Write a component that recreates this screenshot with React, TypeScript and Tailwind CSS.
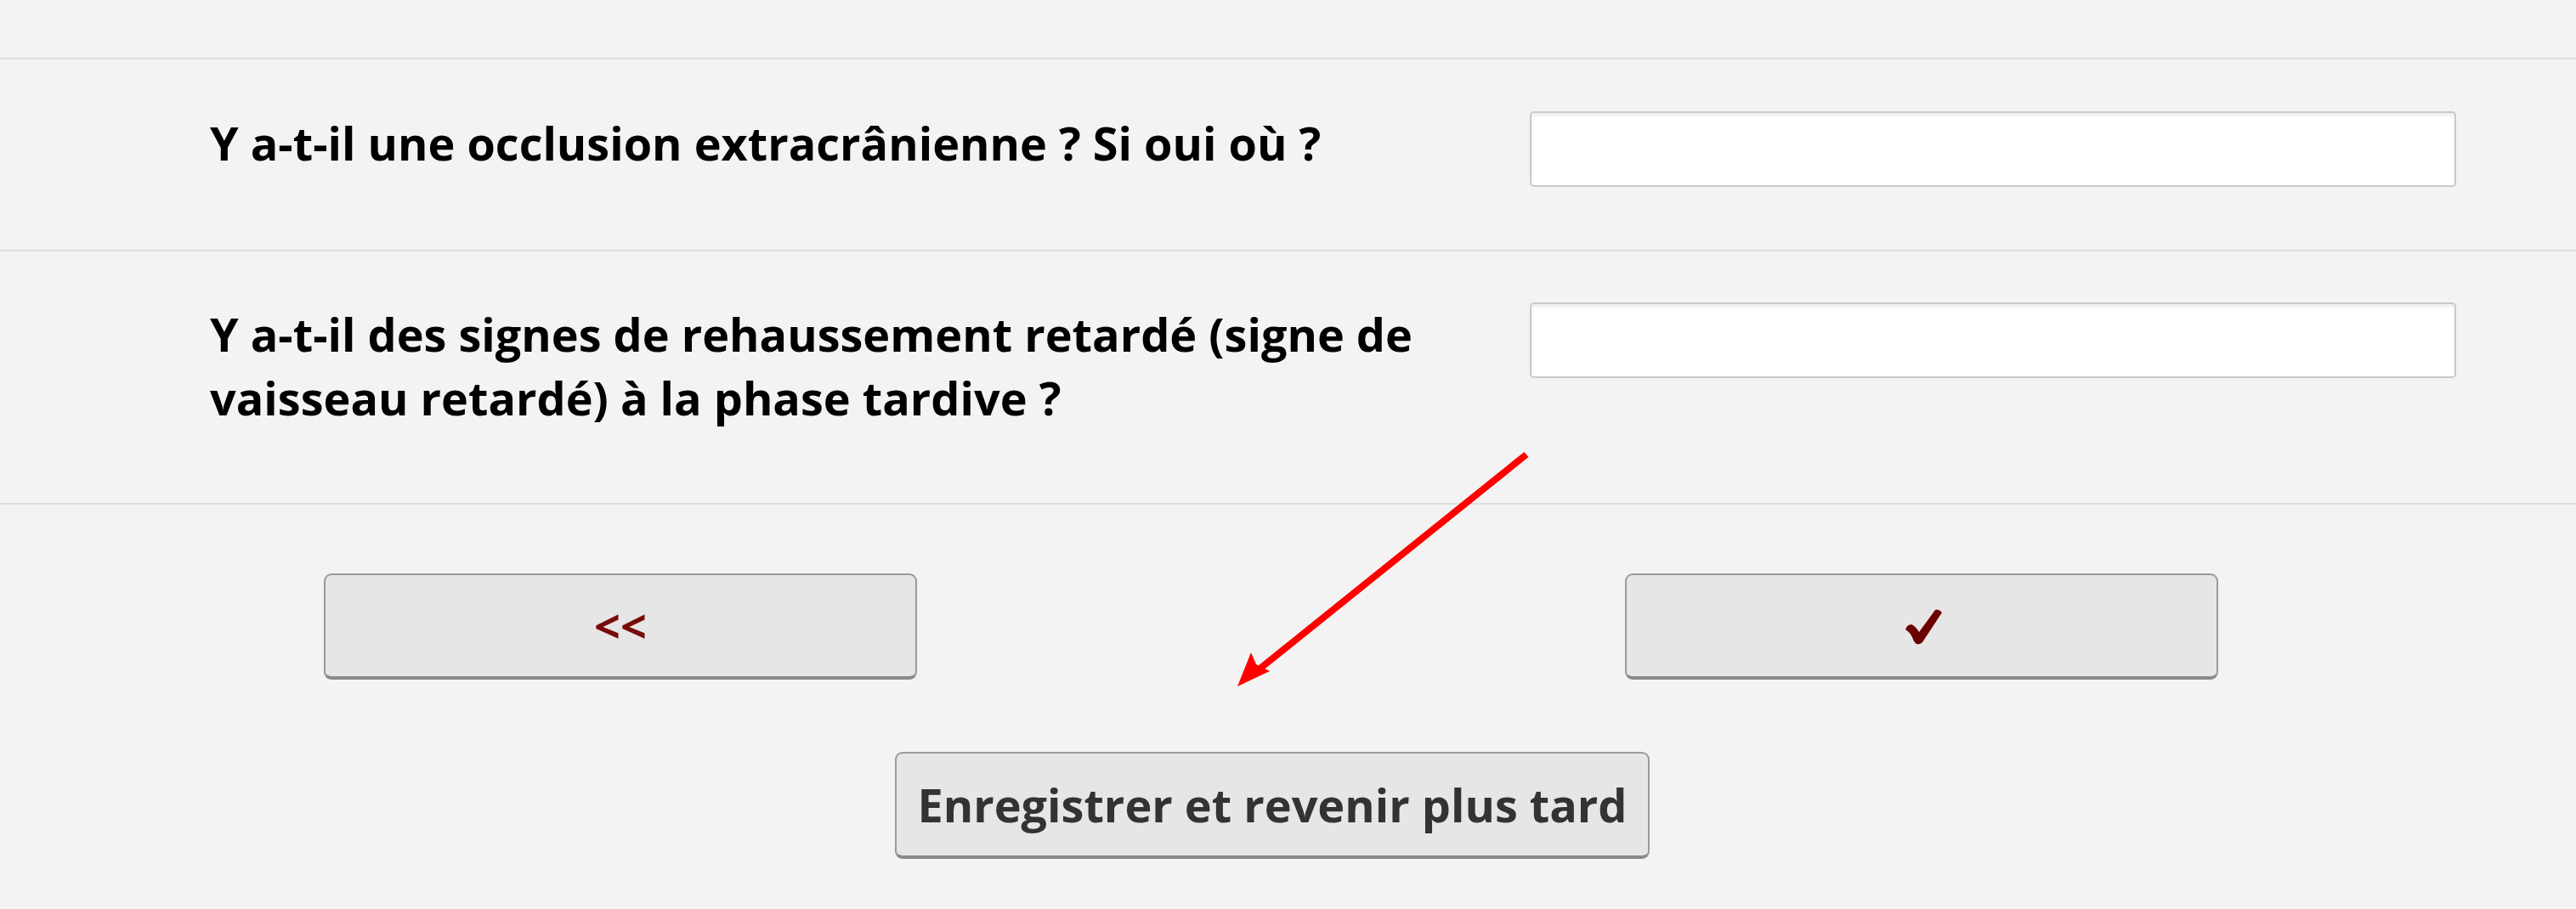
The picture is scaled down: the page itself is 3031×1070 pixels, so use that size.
import React from "react";

function Row({ label, pt }: { label: React.ReactNode; pt: string }) {
  return (
    <div className={`flex items-start pl-[247px] ${pt} pb-[74px] border-b-2 border-[#dddddd]`}>
      <div className="w-[1500px] mr-[53px] mb-[12px] text-[54px] leading-[75px] font-bold text-black">{label}</div>
      <input
        type="text"
        className="w-[1090px] h-[89px] bg-white border-2 border-[#c9c9c9] rounded-[5px] shadow-[inset_0_3px_4px_rgba(0,0,0,0.08)] outline-none"
      />
    </div>
  );
}

export default function App() {
  return (
    <div
      className="relative w-[3031px] h-[1070px] bg-[#f3f3f3] overflow-hidden"
      style={{ fontFamily: '"Open Sans", "Noto Sans", sans-serif' }}
    >
      <div className="h-[70px] border-b-2 border-[#dddddd]" />
      <Row pt="pt-[61px]" label="Y a-t-il une occlusion extracrânienne ? Si oui où ?" />
      <Row
        pt="pt-[60px]"
        label="Y a-t-il des signes de rehaussement retardé (signe de vaisseau retardé) à la phase tardive ?"
      />
      <div className="flex pl-[381px] gap-[833px] mt-[81px]">
        <button className="w-[698px] h-[125px] bg-[#e6e6e6] border-2 border-[#9a9a9a] border-b-[4px] border-b-[#8a8a8a] rounded-[9px] flex items-center justify-center text-[54px] font-bold text-[#7a0a0a]">
          &lt;&lt;
        </button>
        <button className="w-[698px] h-[125px] bg-[#e6e6e6] border-2 border-[#9a9a9a] border-b-[4px] border-b-[#8a8a8a] rounded-[9px] flex items-center justify-center">
          <svg width="44" height="46" viewBox="0 0 44 46" className="ml-[4px]">
            <path
              d="M1 27 Q3 21 8 21 Q13 23 17 30 L36 4 Q40 2 44 7 L21 42 Q18 45 14 44 Q11 42 9 36 Q6 30 1 27 Z"
              fill="#6c0000"
            />
          </svg>
        </button>
      </div>
      <div className="flex pl-[1053px] mt-[85px]">
        <button className="w-[888px] h-[126px] bg-[#e6e6e6] border-2 border-[#9a9a9a] border-b-[4px] border-b-[#8a8a8a] rounded-[9px] flex items-center justify-center text-[54px] font-bold text-[#333333]">
          Enregistrer et revenir plus tard
        </button>
      </div>
      <svg className="absolute left-0 top-0 pointer-events-none" width="3031" height="1070">
        <line x1="1796" y1="535" x2="1480" y2="789" stroke="#ff0000" strokeWidth="8" />
        <polygon points="1456,808 1472,768 1478,782 1494,790" fill="#ff0000" />
      </svg>
    </div>
  );
}
